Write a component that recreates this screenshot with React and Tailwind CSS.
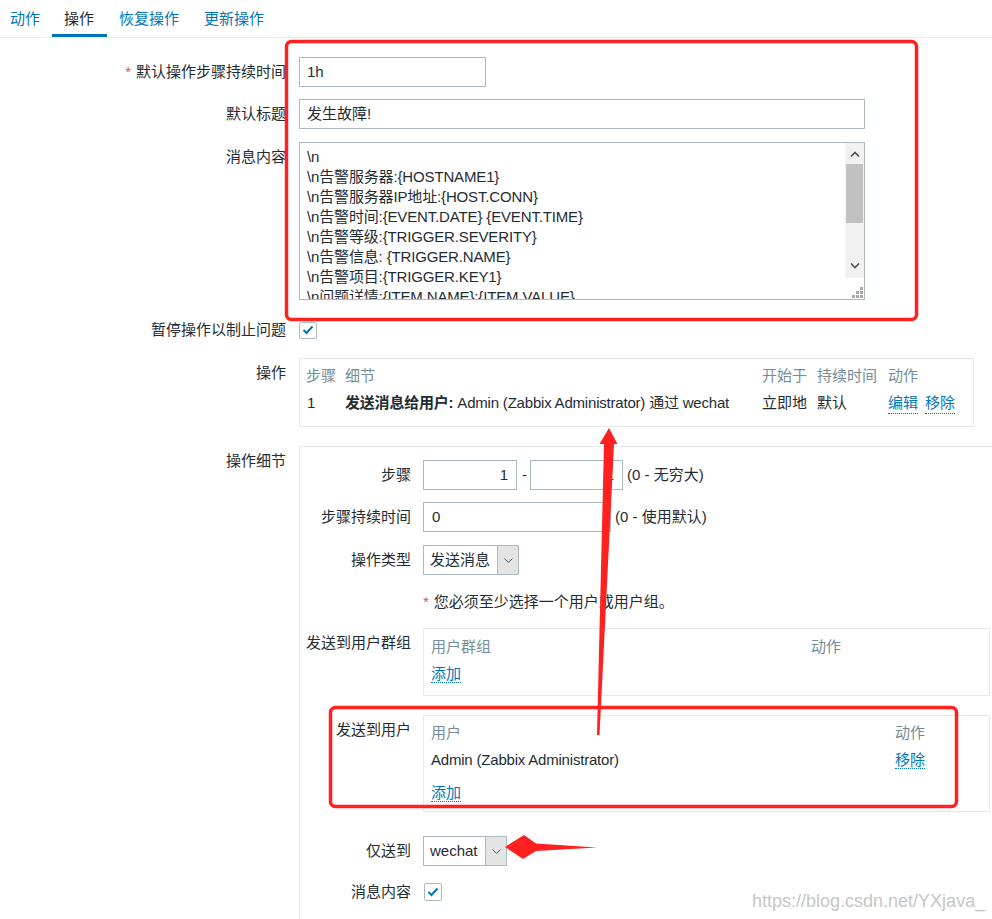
import React from "react";

const tabs = [
  { name: "动作", cls: "pl-[10px] pr-[12px]" },
  { name: "操作", cls: "pl-[12px] pr-[13px]", active: true },
  { name: "恢复操作", cls: "pl-[12px] pr-[13px]" },
  { name: "更新操作", cls: "pl-[12px] pr-[13px]" },
];

const messageLines = [
  "\\n",
  "\\n告警服务器:{HOSTNAME1}",
  "\\n告警服务器IP地址:{HOST.CONN}",
  "\\n告警时间:{EVENT.DATE} {EVENT.TIME}",
  "\\n告警等级:{TRIGGER.SEVERITY}",
  "\\n告警信息: {TRIGGER.NAME}",
  "\\n告警项目:{TRIGGER.KEY1}",
  "\\n问题详情:{ITEM.NAME}:{ITEM.VALUE}",
];

function Chevron({ up, className }) {
  return (
    <svg width="10" height="6" viewBox="0 0 10 6" className={className}>
      {up ? (
        <polyline points="1,5.5 5,1.5 9,5.5" fill="none" stroke="currentColor" strokeWidth="1.6" />
      ) : (
        <polyline points="1,0.5 5,4.5 9,0.5" fill="none" stroke="currentColor" strokeWidth="1.6" />
      )}
    </svg>
  );
}

function Check({ size = "w-[18px] h-[18px]" }) {
  return (
    <div className={`${size} border border-[#acbbc2] rounded-[2px] bg-white flex items-center justify-center`}>
      <svg width="12" height="10" viewBox="0 0 12 10">
        <polyline points="1.5,5 4.5,8 10.5,1.5" fill="none" stroke="#0275b8" strokeWidth="2" />
      </svg>
    </div>
  );
}

function Select({ text, width }) {
  return (
    <div className={`${width} h-[30px] border border-[#acbbc2] flex bg-white`}>
      <div className="flex-1 pl-[6px] leading-[28px]">{text}</div>
      <div className="w-[21px] bg-[#e4e4e4] border-l border-[#acbbc2] flex items-center justify-center text-[#555]">
        <svg width="9" height="5" viewBox="0 0 9 5">
          <polyline points="0.5,0.5 4.5,4.5 8.5,0.5" fill="none" stroke="currentColor" strokeWidth="1" />
        </svg>
      </div>
    </div>
  );
}

function Link({ children }) {
  return <span className="text-[#0275b8] border-b border-dotted border-[#0275b8]">{children}</span>;
}

function Row({ label, required, className = "", children }) {
  return (
    <div className={`flex ${className}`}>
      <div className="w-[286px] shrink-0 text-right leading-[30px]">
        {required && <span className="text-[#e8504c] mr-[5px]">*</span>}
        {label}
      </div>
      <div className="ml-[13px]">{children}</div>
    </div>
  );
}

function DRow({ label, className = "", children }) {
  return (
    <div className={`flex ${className}`}>
      <div className="w-[111px] shrink-0 text-right leading-[30px]">{label}</div>
      <div className="ml-[12px]">{children}</div>
    </div>
  );
}

function MessageBox() {
  return (
    <div className="w-[566px] h-[158px] border border-[#acbbc2] flex bg-white">
      <div className="flex-1 overflow-hidden pl-[7px] pt-[4px] leading-[20px] whitespace-pre tracking-[-0.15px]">
        {messageLines.map((l, i) => (
          <div key={i}>{l}</div>
        ))}
      </div>
      <div className="w-[19px] flex flex-col">
        <div className="h-[135px] bg-[#f1f1f1] flex flex-col">
          <div className="h-[21px] flex items-center justify-center text-[#505050]">
            <Chevron up />
          </div>
          <div className="h-[59px] bg-[#c1c1c1] mx-[1px]" />
          <div className="flex-1" />
          <div className="h-[24px] flex items-center justify-center text-[#505050]">
            <Chevron />
          </div>
        </div>
        <div className="flex-1 flex items-end justify-end pr-[1px] pb-[1px]">
          <svg width="11" height="11" viewBox="0 0 11 11">
            <rect x="8" y="0" width="3" height="3" fill="#a8a8a8" />
            <rect x="4" y="4" width="3" height="3" fill="#a8a8a8" />
            <rect x="8" y="4" width="3" height="3" fill="#a8a8a8" />
            <rect x="0" y="8" width="3" height="3" fill="#a8a8a8" />
            <rect x="4" y="8" width="3" height="3" fill="#a8a8a8" />
            <rect x="8" y="8" width="3" height="3" fill="#a8a8a8" />
          </svg>
        </div>
      </div>
    </div>
  );
}

function OperationsTable() {
  return (
    <div className="w-[675px] border border-[#e5e9eb] pl-[6px] pt-[7px] pb-[12px]">
      <div className="flex leading-[20px] text-[#768d99]">
        <div className="w-[39px]">步骤</div>
        <div className="w-[417px]">细节</div>
        <div className="w-[55px]">开始于</div>
        <div className="w-[71px]">持续时间</div>
        <div>动作</div>
      </div>
      <div className="flex leading-[20px] mt-[7px]">
        <div className="w-[39px] pl-[1px]">1</div>
        <div className="w-[417px] tracking-[-0.2px]">
          <span className="font-bold">发送消息给用户:</span> Admin (Zabbix Administrator) 通过 wechat
        </div>
        <div className="w-[55px]">立即地</div>
        <div className="w-[71px]">默认</div>
        <div className="flex gap-[7px]">
          <Link>编辑</Link>
          <Link>移除</Link>
        </div>
      </div>
    </div>
  );
}

function OperationDetails() {
  return (
    <div className="w-[720px] border border-[#e5e9eb] pt-[13px] pb-[40px]">
      <DRow label="步骤">
        <div className="flex items-center">
          <div className="w-[94px] h-[30px] border border-[#acbbc2] text-right pr-[8px] leading-[28px]">1</div>
          <span className="ml-[5px] mr-[3px]">-</span>
          <div className="w-[93px] h-[30px] border border-[#acbbc2] text-right pr-[8px] leading-[28px]">1</div>
          <span className="ml-[4px]">(0 - 无穷大)</span>
        </div>
      </DRow>
      <DRow label="步骤持续时间" className="mt-[12px]">
        <div className="flex items-center">
          <div className="w-[188px] h-[30px] border border-[#acbbc2] pl-[8px] leading-[28px]">0</div>
          <span className="ml-[4px]">(0 - 使用默认)</span>
        </div>
      </DRow>
      <DRow label="操作类型" className="mt-[13px]">
        <Select text="发送消息" width="w-[96px]" />
      </DRow>
      <DRow label="" className="mt-[12px]">
        <div className="leading-[30px]">
          <span className="text-[#e8504c] mr-[5px]">*</span>您必须至少选择一个用户或用户组。
        </div>
      </DRow>
      <DRow label="发送到用户群组" className="mt-[11px]">
        <div className="w-[567px] border border-[#e5e9eb] pl-[7px] pt-[8px] pb-[11px] leading-[20px]">
          <div className="flex text-[#768d99]">
            <div className="w-[380px]">用户群组</div>
            <div>动作</div>
          </div>
          <div className="mt-[7px]">
            <Link>添加</Link>
          </div>
        </div>
      </DRow>
      <DRow label="发送到用户" className="mt-[19px]">
        <div className="w-[567px] border border-[#e5e9eb] pl-[7px] pt-[7px] pb-[8px] leading-[20px]">
          <div className="flex text-[#768d99]">
            <div className="w-[464px]">用户</div>
            <div>动作</div>
          </div>
          <div className="flex mt-[7px] tracking-[-0.2px]">
            <div className="w-[464px]">Admin (Zabbix Administrator)</div>
            <div className="tracking-normal">
              <Link>移除</Link>
            </div>
          </div>
          <div className="mt-[13px]">
            <Link>添加</Link>
          </div>
        </div>
      </DRow>
      <DRow label="仅送到" className="mt-[24px]">
        <Select text="wechat" width="w-[84px]" />
      </DRow>
      <DRow label="消息内容" className="mt-[11px]">
        <div className="h-[30px] flex items-center pl-[1px]">
          <Check />
        </div>
      </DRow>
    </div>
  );
}

export default function App() {
  return (
    <div className="relative w-[992px] h-[919px] overflow-hidden bg-white text-[15px] text-[#1f2c33] font-['Liberation_Sans','Noto_Sans_CJK_SC',sans-serif]">
      <div className="flex h-[38px] border-b border-[#e8ebed]">
        {tabs.map((t) => (
          <div
            key={t.name}
            className={`h-[37px] pt-[4px] flex items-center border-b-[3px] ${t.cls} ${
              t.active ? "border-[#0275b8] text-[#1f2c33]" : "border-transparent text-[#0275b8]"
            }`}
          >
            {t.name}
          </div>
        ))}
      </div>

      <div className="pt-[19px]">
        <Row label="默认操作步骤持续时间" required>
          <div className="w-[187px] h-[30px] border border-[#acbbc2] pl-[7px] leading-[28px]">1h</div>
        </Row>
        <Row label="默认标题" className="mt-[12px]">
          <div className="w-[566px] h-[30px] border border-[#acbbc2] pl-[7px] leading-[28px]">发生故障!</div>
        </Row>
        <Row label="消息内容" className="mt-[13px]">
          <MessageBox />
        </Row>
        <Row label="暂停操作以制止问题" className="mt-[15px]">
          <div className="h-[30px] flex items-center">
            <Check size="w-[18px] h-[17px]" />
          </div>
        </Row>
        <Row label="操作" className="mt-[13px]">
          <OperationsTable />
        </Row>
        <Row label="操作细节" className="mt-[19px]">
          <OperationDetails />
        </Row>
      </div>

      <div className="absolute left-[752px] top-[889px] text-[18px] leading-[24px] text-[#c6c6c6] font-['Liberation_Sans',sans-serif]">
        https://blog.csdn.net/YXjava_
      </div>

      <svg className="absolute left-0 top-0 pointer-events-none" width="992" height="919" viewBox="0 0 992 919">
        <rect x="286.5" y="41.5" width="630" height="278" rx="5" fill="none" stroke="#ff2020" strokeWidth="3.5" />
        <rect x="330.5" y="707.5" width="626" height="99" rx="5" fill="none" stroke="#ff2020" strokeWidth="3.5" />
        <polygon points="609,428 617.5,444 614,444 599.5,735 597,735 604,444 599.5,444" fill="#ff2020" />
        <polygon points="505,847 524,835 536,843.5 597,847.5 536,851 523,859" fill="#ff2020" />
      </svg>
    </div>
  );
}
